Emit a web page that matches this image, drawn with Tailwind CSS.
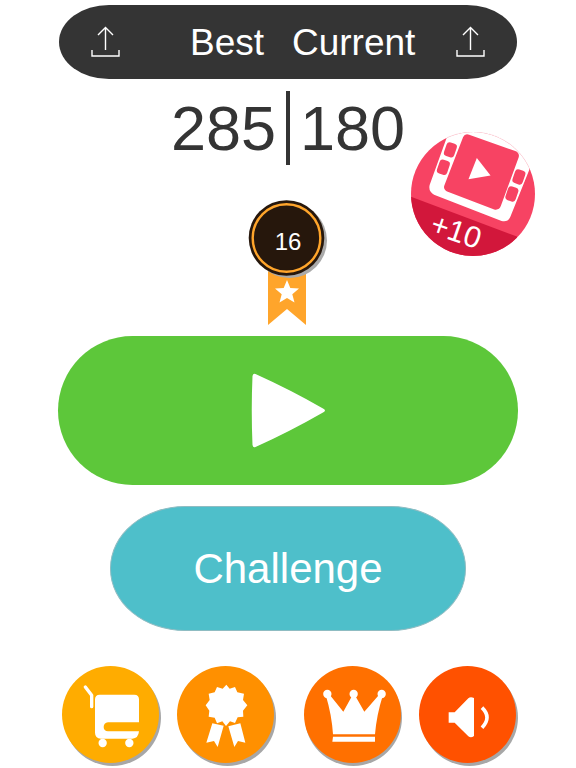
<!DOCTYPE html>
<html lang="en">
<head>
<meta charset="utf-8">
<meta name="viewport" content="width=device-width, initial-scale=1">
<title>Game menu</title>
<script src="https://cdn.jsdelivr.net/npm/@tailwindcss/browser@4"></script>
</head>
<body class="bg-white font-['Liberation_Sans',Arial,sans-serif]">
<main class="relative flex flex-col px-[58px] pt-[5px] pb-[5px]">
  <header class="mx-px grid h-[74px] grid-cols-2 rounded-[50px/37px] bg-[#343434] px-8 text-[37px] leading-none text-white">
    <div class="flex items-center justify-between pr-6">
      <button type="button" aria-label="Share best score">
        <svg class="block h-8 w-[30px]" viewBox="0 0 30 32" fill="none" stroke="#fff" stroke-width="1.4"><path d="M14.5 1.5V24M7 9l7.500-7.500L22 9M1 24v6h27v-6"/></svg>
      </button>
      <span>Best</span>
    </div>
    <div class="flex items-center justify-between pl-1">
      <span>Current</span>
      <button type="button" aria-label="Share current score">
        <svg class="block h-8 w-[30px]" viewBox="0 0 30 32" fill="none" stroke="#fff" stroke-width="1.4"><path d="M15.500 1.500V24M8 9l7.500-7.500L23 9M2 24v6h27v-6"/></svg>
      </button>
    </div>
  </header>

  <section aria-label="Scores" class="mt-3 flex h-[74px] items-center justify-center gap-[10px] text-[63px] leading-none text-[#343434]">
    <span>285</span>
    <span class="w-1 self-stretch bg-[#343434]"></span>
    <span>180</span>
  </section>

  <button type="button" aria-label="Watch a video for 10 more" class="absolute top-[132px] right-[41px] size-[124px]">
    <svg class="block size-full" viewBox="35 37 371 371">
      <defs><clipPath id="disc"><circle cx="220.500" cy="222.500" r="185.500"/></clipPath></defs>
      <g clip-path="url(#disc)">
        <path fill="#f74363" d="M30 30h380v380H30z"/>
        <path fill="#d2173b" d="M30 229L352 350L350 420H30z"/>
        <path fill="#fff" d="M145 45L91 195Q86 214 104 225L306 303Q324 308 332 291L389 150L400 20H150z"/>
        <path fill="#f74363" d="M191 52Q196 41 209 45L347 94Q361 100 357 113L304 258Q299 272 284 269L145 216Q130 209 135 196z"/>
        <g fill="#f74363">
          <rect x="137" y="69" width="32" height="43" rx="10" transform="rotate(19 153 90)"/>
          <rect x="116" y="121" width="32" height="43" rx="10" transform="rotate(19 132 142)"/>
          <rect x="342" y="150" width="32" height="43" rx="10" transform="rotate(19 358 171)"/>
          <rect x="321" y="201" width="32" height="43" rx="10" transform="rotate(19 337 222)"/>
        </g>
        <path fill="#fff" d="M232 115L273 167L207 178z"/>
      </g>
      <text x="88" y="338" transform="rotate(19 88 338)" fill="#fff" font-size="90">+10</text>
      <path d="M145 53A185 185 0 0 1 389 145" fill="none" stroke="#f9dbe1" stroke-width="2" stroke-dasharray="5 4"/>
    </svg>
  </button>

  <div class="mt-[35px] flex justify-center">
    <svg class="block h-[126px] w-20" viewBox="0 0 80 126" role="img" aria-label="Level 16">
      <path fill="#ffa52b" d="M20 66h38v59L39 109 20 125z"/>
      <path fill="#fff" d="M39 80l3.300 8 8.700.6-6.700 5.600 2.200 8.400L39 98l-7.500 4.600 2.200-8.400L27 88.600l8.700-.6z"/>
      <circle cx="41.500" cy="40.500" r="37.500" fill="#aaa"/>
      <circle cx="38.500" cy="38" r="37.800" fill="#26170c"/>
      <circle cx="38.500" cy="38" r="33.800" fill="none" stroke="#ffa52b" stroke-width="2.400"/>
      <text x="40" y="50" fill="#fff" font-size="24" text-anchor="middle">16</text>
    </svg>
  </div>

  <button type="button" aria-label="Play" class="mt-[10px] flex h-[149px] items-center justify-center rounded-full bg-[#5dc73a]">
    <svg class="block h-[75px] w-[75px]" viewBox="0 0 75 75"><path fill="#fff" d="M1.500 3Q2 .3 4.500 1Q40 17 72 35.500Q76 37.500 72 39.500Q38 59 4.500 74Q2 75 1.500 72Q0 37 1.500 3z"/></svg>
  </button>

  <button type="button" class="mx-[52px] mt-[21px] flex h-[125px] items-center justify-center rounded-[75px/62px] border border-[#8fbcc2] bg-[#4ebfca] text-[42px] leading-none text-white">Challenge</button>

  <nav aria-label="Menu" class="mt-[35px] flex justify-between pr-0.5 pl-1">
    <div class="flex gap-[18px]">
      <button type="button" aria-label="Shop" class="size-[97px] rounded-full bg-[#ffac00] shadow-[2px_3px_0_#a7a7a7]">
        <svg class="block size-full" viewBox="20 18 291 291">
          <path d="M90 81L109 106V140" fill="none" stroke="#fff" stroke-width="10" stroke-linecap="round" stroke-linejoin="round"/>
          <path fill="#fff" d="M133 104H237Q251 104 251 118V187H158Q145 189 145 201Q145 213 158 214H251Q249 236 231 236H137Q119 234 119 218V118Q119 104 133 104z"/>
          <circle cx="142" cy="249" r="12.500" fill="#fff"/><circle cx="222" cy="249" r="12.500" fill="#fff"/>
        </svg>
      </button>
      <button type="button" aria-label="Achievements" class="size-[97px] rounded-full bg-[#ff9000] shadow-[2px_3px_0_#a7a7a7]">
        <svg class="block size-full" viewBox="20 18 291 291" fill="#fff">
          <path d="M168 74L178 86L194 81L201 97L221 101L218 120L231 136L218 152L219 170L202 172L194 189L179 184L167 198L156 184L140 190L133 173L115 170L117 152L106 136L118 120L115 101L133 97L140 81L157 86z"/>
          <path d="M126 190L160 197L142 261L131 243L108 248zM210 190L225 248L203 243L192 261L174 199z"/>
        </svg>
      </button>
    </div>
    <div class="flex gap-[18px]">
      <button type="button" aria-label="Leaderboard" class="size-[97px] rounded-full bg-[#ff7000] shadow-[1px_3px_0_#a7a7a7]">
        <svg class="block size-full" viewBox="18 18 291 291" fill="#fff">
          <circle cx="88" cy="102" r="12.500"/><circle cx="167" cy="102" r="12.500"/><circle cx="251" cy="102" r="12.500"/>
          <path d="M84 108L98 108L136 155L162 108H172L199 155L242 106L254 108Q236 164 231 223H105Q101 164 84 108zM105 230H231V245H103z"/>
        </svg>
      </button>
      <button type="button" aria-label="Sound" class="size-[97px] rounded-full bg-[#ff5100] shadow-[2px_3px_0_#a7a7a7]">
        <svg class="block size-full" viewBox="22 18 291 291">
          <path fill="#fff" d="M111 157H129L170 115Q176 109 187 114V228Q178 235 170 229L129 188H111z"/>
          <path d="M211 143Q241 172 211 203" fill="none" stroke="#fff" stroke-width="11"/>
        </svg>
      </button>
    </div>
  </nav>
</main>
</body>
</html>
